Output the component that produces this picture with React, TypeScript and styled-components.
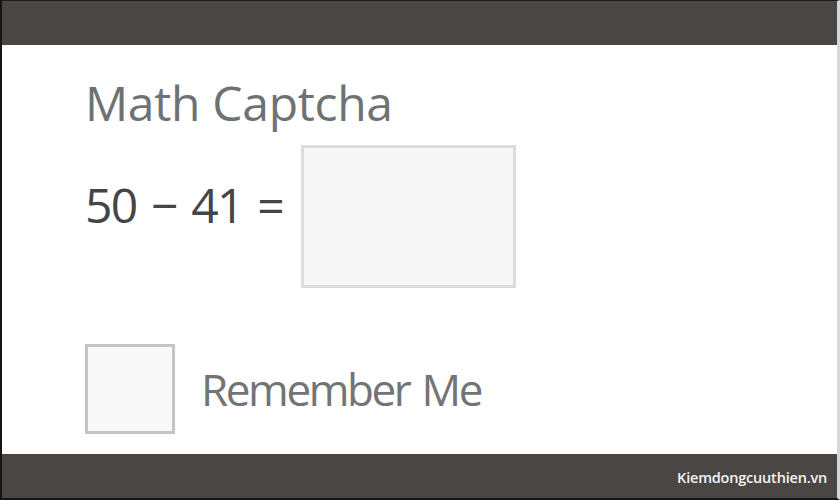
import styled, { createGlobalStyle } from "styled-components";

const Global = createGlobalStyle`
  html, body {
    margin: 0;
    padding: 0;
    background: #fff;
  }
  body {
    font-family: "Open Sans", "Noto Sans", sans-serif;
  }
`;

const Frame = styled.div`
  box-sizing: border-box;
  width: 840px;
  height: 500px;
  display: flex;
  flex-direction: column;
  border-left: 2px solid #161514;
  border-right: 3px solid #d6d6d6;
  border-top: 1px solid #1d1b1a;
  border-bottom: 2px solid #161514;
  background: #fff;
`;

const Bar = styled.div`
  height: 44px;
  flex-shrink: 0;
  background: #4a4644;
  display: flex;
  align-items: center;
  justify-content: flex-end;
  padding-right: 10px;
`;

const Watermark = styled.span`
  color: #f4f4f4;
  font-family: "Open Sans", sans-serif;
  font-weight: 600;
  font-size: 14.5px;
  letter-spacing: -0.2px;
  margin-top: 2px;
`;

const Form = styled.form`
  flex: 1;
  padding: 28px 0 0 83px;
  display: flex;
  flex-direction: column;
`;

const Title = styled.h2`
  margin: 0;
  font-weight: 400;
  font-size: 48px;
  line-height: 60px;
  color: #6f7273;
  letter-spacing: -0.3px;
`;

const EquationRow = styled.div`
  display: flex;
  align-items: flex-start;
  gap: 18px;
  margin-top: 12px;
`;

const Equation = styled.label`
  font-size: 48px;
  line-height: 60px;
  color: #444546;
  margin-top: 30px;
  letter-spacing: -1.8px;
  word-spacing: 4px;
`;

const AnswerInput = styled.input`
  box-sizing: border-box;
  width: 215px;
  height: 143px;
  margin: 0;
  background: #f7f7f7;
  border: 3px solid #dcdcdc;
  outline: none;
`;

const RememberRow = styled.div`
  display: flex;
  align-items: center;
  gap: 26px;
  margin-top: 56px;
`;

const Box = styled.input`
  appearance: none;
  box-sizing: border-box;
  width: 90px;
  height: 90px;
  margin: 0;
  background: #f8f8f8;
  border: 3px solid #c4c4c4;
`;

const RememberLabel = styled.label`
  font-size: 44px;
  line-height: 60px;
  color: #727576;
  letter-spacing: -2.4px;
  word-spacing: 3px;
`;

export default function App() {
  return (
    <>
      <Global />
      <Frame>
        <Bar />
        <Form onSubmit={(e) => e.preventDefault()}>
          <Title>Math Captcha</Title>
          <EquationRow>
            <Equation htmlFor="answer">50 − 41 =</Equation>
            <AnswerInput id="answer" type="text" />
          </EquationRow>
          <RememberRow>
            <Box id="remember" type="checkbox" />
            <RememberLabel htmlFor="remember">Remember Me</RememberLabel>
          </RememberRow>
        </Form>
        <Bar>
          <Watermark>Kiemdongcuuthien.vn</Watermark>
        </Bar>
      </Frame>
    </>
  );
}
